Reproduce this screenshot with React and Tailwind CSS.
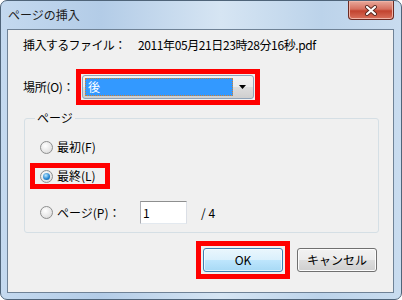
import React from "react";

function Radio({ checked }) {
  return (
    <span className="relative flex h-[13px] w-[13px] shrink-0 items-center justify-center rounded-full border border-[#8e8f8f] bg-[radial-gradient(circle_at_40%_35%,#ffffff,#e6e6e6_60%,#cfcfcf)]">
      {checked && (
        <span className="h-[7px] w-[7px] rounded-full bg-[radial-gradient(circle_at_40%_35%,#bfe9ff,#2a8ad4_55%,#0b4f8f)]" />
      )}
    </span>
  );
}

function Btn({ children, primary }) {
  return (
    <button
      className={
        primary
          ? "flex h-[24px] w-[80px] items-center justify-center rounded-[3px] border border-[#3c7fb1] bg-[linear-gradient(#eaf6fd,#d9f0fc_50%,#bee6fd_50%,#a7d9f5)] text-[12px] text-black shadow-[inset_0_0_0_1px_#ffffffaa]"
          : "flex h-[24px] w-[80px] items-center justify-center rounded-[3px] border border-[#707070] bg-[linear-gradient(#f2f2f2,#ebebeb_50%,#dddddd_50%,#cfcfcf)] text-[12px] text-black shadow-[inset_0_0_0_1px_#fcfcfc]"
      }
    >
      {children}
    </button>
  );
}

export default function App() {
  return (
    <div
      className="h-[300px] w-[402px] overflow-hidden rounded-[7px] border border-[#4f6479] bg-[linear-gradient(90deg,#c4d9ef,#b3cce7_25%,#d6e5f3_55%,#bcd3ea_80%,#c9dcef)] text-black"
      style={{ fontFamily: '"Noto Sans CJK JP", "Liberation Sans", sans-serif' }}
    >
      {/* title bar */}
      <div className="flex h-[28px] items-start justify-between">
        <div className="ml-[7px] mt-[6px] text-[12px] leading-[16px] text-[#1b1b1b]">ページの挿入</div>
        <div className="mr-[7px] flex h-[19px] w-[46px] items-center justify-center rounded-b-[4px] border border-t-0 border-[#6b2a22] bg-[linear-gradient(#e9a99b,#d6705f_45%,#c2432f_55%,#d9715c)] shadow-[inset_0_0_0_1px_#f0b3a6]">
          <svg width="14" height="11" viewBox="0 0 14 11">
            <path d="M3 2 L11 9 M11 2 L3 9" stroke="#5a2a22" strokeWidth="4" strokeLinecap="round" />
            <path d="M3 2 L11 9 M11 2 L3 9" stroke="#ffffff" strokeWidth="2.2" strokeLinecap="round" />
          </svg>
        </div>
      </div>

      {/* client area */}
      <div className="ml-[6px] h-[264px] w-[387px] border border-[#6f8296] bg-[#f0f0f0] text-[12px]">
        <div className="mt-[8px] flex h-[14px] items-center pl-[15px] leading-[14px]">
          <span className="w-[115px] tracking-[-0.6px]">挿入するファイル：</span>
          <span className="tracking-[-0.4px]">2011年05月21日23時28分16秒.pdf</span>
        </div>

        <div className="mt-[17px] flex items-center pl-[15px]">
          <span className="w-[53px] tracking-[-0.3px]">場所(O)：</span>
          <div className="border-[5px] border-[#ff0000] p-[1px]">
            <div className="flex h-[24px] w-[172px] items-center rounded-[3px] border border-[#8fa3b8] bg-[linear-gradient(#f2f2f2,#ebebeb_50%,#dddddd_50%,#cfcfcf)] p-[2px]">
              <div className="flex h-[18px] flex-1 items-center border border-dotted border-[#d08030] bg-[#3399ff] pl-[2px] text-white">
                後
              </div>
              <div className="flex w-[18px] items-center justify-center">
                <svg width="7" height="4" viewBox="0 0 7 4">
                  <path d="M0 0 H7 L3.5 4 Z" fill="#000" />
                </svg>
              </div>
            </div>
          </div>
        </div>

        {/* group */}
        <div className="relative ml-[16px] mt-[13px] h-[115px] w-[355px] rounded-[3px] border border-[#d5dfe5]">
          <span className="absolute left-[10px] top-[-8px] bg-[#f0f0f0] px-[2px] leading-[14px]">ページ</span>
          <div className="mt-[21px] flex h-[14px] items-center gap-[4px] pl-[15px]">
            <Radio />
            <span>最初(F)</span>
          </div>
          <div className="ml-[5px] mt-[9px] flex h-[26px] w-[80px] items-center gap-[4px] border-[5px] border-[#ff0000] pl-[5px]">
            <Radio checked />
            <span>最終(L)</span>
          </div>
          <div className="mt-[12px] flex h-[23px] items-center pl-[15px]">
            <Radio />
            <span className="ml-[4px] w-[83px]">ページ(P)：</span>
            <div className="flex h-[23px] w-[47px] items-center border border-b-[#e3e9ef] border-l-[#abadb3] border-r-[#dbdfe6] border-t-[#8e8f8f] bg-white pl-[2px]">
              1
            </div>
            <span className="ml-[14px]">/ 4</span>
          </div>
        </div>

        {/* buttons */}
        <div className="mt-[8px] flex items-center justify-end gap-[7px] pr-[16px]">
          <div className="border-[5px] border-[#ff0000] p-[2px]">
            <Btn primary>OK</Btn>
          </div>
          <Btn>キャンセル</Btn>
        </div>
      </div>
    </div>
  );
}
